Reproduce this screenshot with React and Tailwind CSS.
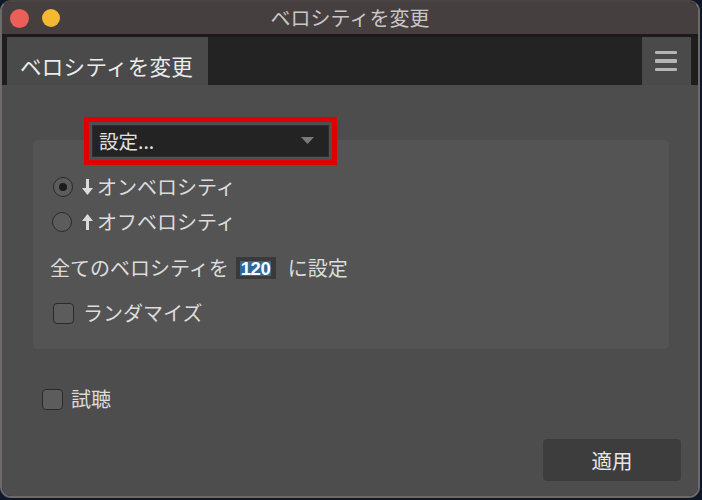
import React from 'react';

function Radio({ checked }) {
  return (
    <div className="w-[20px] h-[20px] rounded-full border-[1.5px] border-[#2a2a2a] bg-[#5c5c5c] flex items-center justify-center">
      {checked && <div className="w-[8px] h-[8px] rounded-full bg-[#1c1c1c]" />}
    </div>
  );
}

function Arrow({ up }) {
  return (
    <svg width="11" height="16" viewBox="0 0 11 16" className={up ? 'rotate-180' : ''}>
      <rect x="4" y="0" width="3" height="10" fill="#dcdcdc" />
      <polygon points="0,9 11,9 5.5,16" fill="#dcdcdc" />
    </svg>
  );
}

function Checkbox() {
  return <div className="w-[21px] h-[21px] rounded-[4px] border-[1.5px] border-[#2a2a2a] bg-[#5c5c5c]" />;
}

export default function App() {
  return (
    <div className="w-[702px] h-[500px] bg-[#0e1828] font-['Noto_Sans_CJK_JP',sans-serif] text-[#dcdcdc]">
      <div className="w-[700px] h-[498px] rounded-[11px] overflow-hidden border-2 border-[#6e6a6a] border-t-[#4a4444] flex flex-col">
        {/* Title bar */}
        <div className="h-[32px] bg-[#463f3f] grid grid-cols-[1fr_auto_1fr] items-center">
          <div className="flex items-center gap-[13px] pl-[8px]">
            <div className="w-[19px] h-[19px] rounded-full bg-[#ec5f59]" />
            <div className="w-[18px] h-[18px] rounded-full bg-[#f4b92f]" />
          </div>
          <div className="text-[20px] leading-none text-[#c9c6c6] -mt-[1px]">ベロシティを変更</div>
          <div />
        </div>
        <div className="h-[3px] bg-[#1b1b1b]" />

        {/* Tab row */}
        <div className="h-[48px] flex">
          <div className="w-[5px] bg-[#1e1e1e]" />
          <div className="w-[201px] bg-[#4a4a4a] flex items-center pl-[13px] pt-[10px] text-[21.5px] leading-none text-[#ececec] tracking-[0.3px]">
            ベロシティを変更
          </div>
          <div className="flex-1 bg-[#232323]" />
          <div className="w-[49px] bg-[#4a4a4a] flex flex-col items-center justify-center gap-[5px] pr-[2px]">
            <div className="w-[22px] h-[3.5px] rounded-[1px] bg-[#b5b5b5]" />
            <div className="w-[22px] h-[3.5px] rounded-[1px] bg-[#b5b5b5]" />
            <div className="w-[22px] h-[3.5px] rounded-[1px] bg-[#b5b5b5]" />
          </div>
          <div className="w-[7px] bg-[#1e1e1e]" />
        </div>

        {/* Body */}
        <div className="flex-1 bg-[#4d4d4d] flex flex-col">
          <div className="relative z-10 mt-[32px] ml-[82px] w-[253px] h-[48px] border-[5px] border-[#e00000] p-[3px] bg-[#4f4f4f]">
            <div className="h-full bg-[#232323] border border-[#2e2e2e] flex items-center justify-between pl-[6px] pr-[14px]">
              <span className="text-[19.5px] leading-none text-[#e0e0e0]">設定...</span>
              <svg width="13" height="8" viewBox="0 0 13 8">
                <polygon points="0,0 13,0 6.5,7" fill="#7a7a7a" />
              </svg>
            </div>
          </div>

          <div className="-mt-[25px] ml-[31px] mr-[29px] h-[209px] rounded-[5px] bg-[#545454] pl-[17px] pt-[36px] flex flex-col">
            <div className="h-[22px] flex items-center">
              <div className="ml-[3px]"><Radio checked /></div>
              <div className="ml-[9px] mr-[4px]"><Arrow /></div>
              <span className="text-[20px] leading-none">オンベロシティ</span>
            </div>
            <div className="h-[22px] mt-[13px] flex items-center">
              <div className="ml-[2px]"><Radio /></div>
              <div className="ml-[10px] mr-[4px]"><Arrow up /></div>
              <span className="text-[20px] leading-none">オフベロシティ</span>
            </div>
            <div className="h-[22px] mt-[24px] flex items-center">
              <span className="text-[20px] leading-none">全てのベロシティを</span>
              <div className="ml-[7px] w-[40px] h-[22px] bg-[#3a3a3a] flex items-center pl-[4px]">
                <span className="bg-[#2c6898] text-white font-['Liberation_Sans',sans-serif] font-bold text-[18.5px] leading-[15px] h-[15px] px-[1px] tracking-[-0.5px]">120</span>
              </div>
              <span className="ml-[12px] text-[20px] leading-none">に設定</span>
            </div>
            <div className="h-[22px] mt-[23px] flex items-center">
              <div className="ml-[3px]"><Checkbox /></div>
              <span className="ml-[9px] text-[20px] leading-none">ランダマイズ</span>
            </div>
          </div>

          <div className="mt-[39px] ml-[40px] h-[22px] flex items-center">
            <Checkbox />
            <span className="ml-[8px] text-[20px] leading-none">試聴</span>
          </div>

          <div className="mt-[29px] self-end mr-[17px] w-[138px] h-[42px] rounded-[4px] bg-[#3d3d3d] flex items-center justify-center text-[20.5px] leading-none text-[#e6e6e6]">
            適用
          </div>
        </div>
      </div>
    </div>
  );
}
